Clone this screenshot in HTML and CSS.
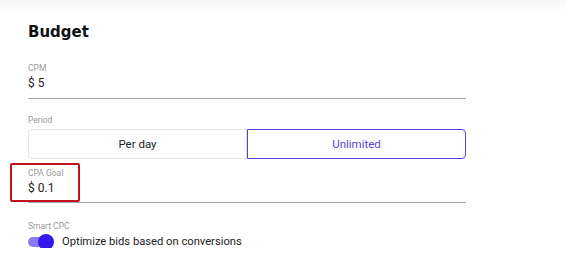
FILE: index.html
```html
<!DOCTYPE html>
<html lang="en">
<head>
  <meta charset="UTF-8">
  <meta name="viewport" content="width=device-width, initial-scale=1.0">
  <title>Budget</title>
  <link rel="stylesheet" href="styles.css">
</head>
<body>
  <div class="top-fade"></div>
  <div class="budget">
    <h2>Budget</h2>

    <!-- CPM -->
    <div class="field">
      <div class="field-label">CPM</div>
      <div class="field-value">$ 5</div>
    </div>

    <!-- Period -->
    <div class="group">
      <div class="field-label">Period</div>
      <div class="toggle-group">
        <button type="button" class="option">Per day</button>
        <button type="button" class="option active">Unlimited</button>
      </div>
    </div>

    <!-- CPA Goal -->
    <div class="field cpa">
      <div class="field-label">CPA Goal</div>
      <div class="field-value">$ 0.1</div>
      <div class="highlight"></div>
    </div>

    <!-- Smart CPC -->
    <div class="group smart">
      <div class="field-label">Smart CPC</div>
      <label class="switch-row">
        <span class="switch"><span class="knob"></span></span>
        Optimize bids based on conversions
      </label>
    </div>
  </div>
</body>
</html>
```

FILE: styles.css
```css
/* Page */
body {
  font-family: 'Roboto', 'Liberation Sans', sans-serif;
  margin: 0;
  padding: 0;
  background: #ffffff;
  color: #333;
}

.top-fade {
  height: 12px;
  background: linear-gradient(#f6f6f6, #ffffff);
}

.budget {
  width: 438px;
  padding: 10px 0 0 28px;
}

.budget h2 {
  font-family: 'DejaVu Sans', sans-serif;
  font-size: 15px;
  line-height: 20px;
  font-weight: bold;
  color: #111;
  margin: 0 0 21px;
}

/* Fields */
.field {
  border-bottom: 1px solid #a8a8a8;
  padding-bottom: 7px;
}

.field-label {
  font-size: 8.5px;
  line-height: 10px;
  color: #9a9a9a;
  margin-bottom: 2px;
}

.field-value {
  font-size: 12px;
  line-height: 16px;
  color: #222;
}

.group {
  margin-top: 16px;
}

/* Period buttons */
.toggle-group {
  display: flex;
  margin-top: 4px;
}

.option {
  flex: 1;
  height: 30px;
  font-family: inherit;
  font-size: 11.5px;
  color: #222;
  background: #ffffff;
  border: 1px solid #e2e2e2;
  border-radius: 4px 0 0 4px;
  cursor: pointer;
}

.option.active {
  color: #5a3fd8;
  border: 1px solid #5a3fd8;
  border-radius: 0 4px 4px 0;
}

/* CPA Goal */
.cpa {
  position: relative;
  margin-top: 9px;
  padding-bottom: 6px;
}

.highlight {
  position: absolute;
  left: -18px;
  top: -5px;
  width: 66px;
  height: 35px;
  border: 2px solid #c0141c;
  border-radius: 2px;
}

/* Smart CPC */
.smart {
  margin-top: 18px;
}

.switch-row {
  display: flex;
  align-items: center;
  gap: 12px;
  font-size: 11.2px;
  color: #222;
  margin-top: 4px;
}

.switch {
  position: relative;
  width: 22px;
  height: 10px;
  border-radius: 5px;
  background: #8a7af0;
}

.knob {
  position: absolute;
  right: -4px;
  top: -3px;
  width: 16px;
  height: 16px;
  border-radius: 50%;
  background: #3517ee;
}
```
